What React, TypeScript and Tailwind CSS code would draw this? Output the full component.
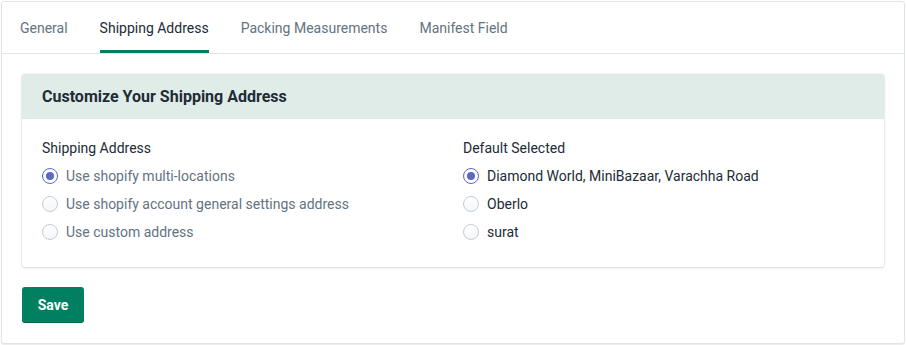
import React, { useState } from 'react';

const TABS = ['General', 'Shipping Address', 'Packing Measurements', 'Manifest Field'];

const Radio: React.FC<{ label: string; checked: boolean; muted?: boolean; onSelect: () => void }> = ({ label, checked, muted, onSelect }) => (
  <label className="flex items-center gap-2 h-7 cursor-pointer" onClick={onSelect}>
    <span
      className={`flex items-center justify-center w-4 h-4 rounded-full border ${
        checked ? 'border-[#5c6ac4] bg-white' : 'border-[#c4cdd5] bg-gradient-to-b from-white to-[#f4f6f8]'
      }`}
    >
      {checked && <span className="w-2 h-2 rounded-full bg-[#5c6ac4]" />}
    </span>
    <span className={`text-sm ${muted ? 'text-[#637381]' : 'text-[#212b36]'}`}>{label}</span>
  </label>
);

export default function App() {
  const [source, setSource] = useState(0);
  const [location, setLocation] = useState(0);

  return (
    <div className="w-[906px] h-[345px] bg-white p-px font-['Roboto','Liberation_Sans',sans-serif]">
      <div className="h-[343px] w-[904px] rounded-[3px] border border-[#e1e3e8] bg-white shadow-[0_1px_1px_rgba(63,63,68,0.1)]">
        {/* Tabs */}
        <div className="flex h-[52px] gap-8 border-b border-[#e1e3e8] pl-[18px]">
          {TABS.map((t, i) => (
            <div
              key={t}
              className={`flex items-center pt-[4px] border-b-[3px] text-sm ${
                i === 1 ? 'border-[#008060] text-[#212b36]' : 'border-transparent text-[#637381]'
              }`}
            >
              {t}
            </div>
          ))}
        </div>

        <div className="p-5">
          {/* Card */}
          <div className="rounded-[3px] bg-white shadow-[0_0_0_1px_rgba(63,63,68,0.05),0_1px_3px_0_rgba(63,63,68,0.15)]">
            <div className="h-[45px] flex items-center px-5 rounded-t-[3px] bg-[#dfece8]">
              <h2 className="text-base font-bold text-[#212b36]">Customize Your Shipping Address</h2>
            </div>
            <div className="grid grid-cols-2 gap-x-5 px-5 pt-5 pb-[21px]">
              <div>
                <p className="text-sm text-[#212b36] leading-[18px] mb-[5px]">Shipping Address</p>
                <Radio label="Use shopify multi-locations" checked={source === 0} muted onSelect={() => setSource(0)} />
                <Radio label="Use shopify account general settings address" checked={source === 1} muted onSelect={() => setSource(1)} />
                <Radio label="Use custom address" checked={source === 2} muted onSelect={() => setSource(2)} />
              </div>
              <div>
                <p className="text-sm text-[#212b36] leading-[18px] mb-[5px]">Default Selected</p>
                <Radio label="Diamond World, MiniBazaar, Varachha Road" checked={location === 0} onSelect={() => setLocation(0)} />
                <Radio label="Oberlo" checked={location === 1} onSelect={() => setLocation(1)} />
                <Radio label="surat" checked={location === 2} onSelect={() => setLocation(2)} />
              </div>
            </div>
          </div>

          <button className="mt-5 h-9 w-[62px] rounded-[3px] bg-[#008060] text-sm font-bold text-white shadow-[inset_0_-1px_0_rgba(0,0,0,0.2)]">
            Save
          </button>
        </div>
      </div>
    </div>
  );
}
